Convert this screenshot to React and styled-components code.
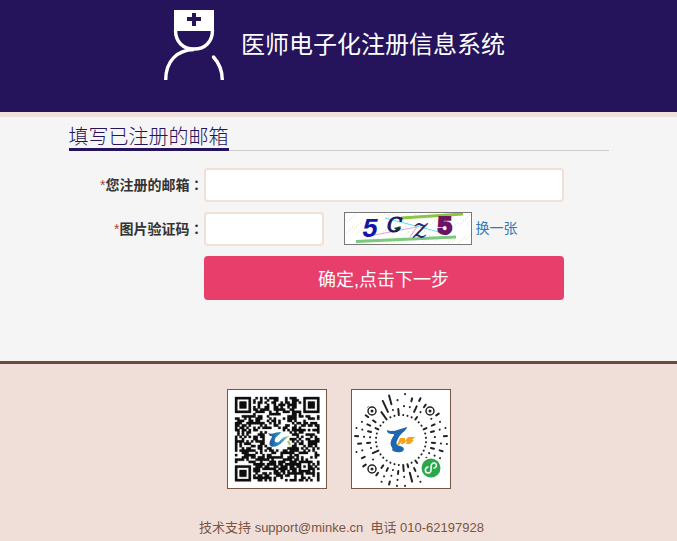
import React from "react";
import styled, { createGlobalStyle } from "styled-components";

const GlobalStyle = createGlobalStyle`
  * {
    box-sizing: border-box;
  }

  body {
    margin: 0;
    background-color: #efdfd8;
    color: #333;
    font-family: "Liberation Sans", "Noto Sans CJK SC", sans-serif;
    font-size: 14px;
    line-height: 20px;
  }
`;

const Header = styled.header`
  display: flex;
  justify-content: center;
  align-items: center;
  gap: 17px;
  height: 117px;
  padding: 0 8px 22px 0;
  background-color: #25135c;
  border-bottom: 5px solid #efe0d9;
`;

const SystemName = styled.h1`
  margin: 0;
  color: #fff;
  font-size: 24px;
  font-weight: 400;
  line-height: 30px;
`;

const Main = styled.main`
  padding: 10px 20px 61px;
  background-color: #f5f5f5;
  border-bottom: 3px solid #6b4a3a;
`;

const Content = styled.div`
  max-width: 540px;
  margin: 0 auto;
`;

const TitleBar = styled.div`
  display: flex;
  margin-bottom: 17px;
  border-bottom: 1px solid #ccc;
`;

const Title = styled.h2`
  margin: 0 0 -1px;
  color: #25135c;
  border-bottom: 3px solid #25135c;
  font-size: 20px;
  font-weight: 300;
  line-height: 21px;
`;

const Form = styled.form`
  display: flex;
  flex-direction: column;
  gap: 10px;
`;

const Row = styled.div`
  display: grid;
  grid-template-columns: 3fr 8fr 1fr;
  align-items: start;
`;

const Label = styled.label`
  font-weight: bold;
  line-height: 32px;
  text-align: right;
  white-space: nowrap;
`;

const Required = styled.span`
  color: #a94442;
  font-weight: normal;
`;

const Colon = styled.span`
  font-family: "Noto Sans CJK TC", sans-serif;
`;

const Field = styled.div`
  display: flex;
  align-items: flex-start;
  grid-column: 2;
`;

const Input = styled.input`
  width: ${({ $short }) => ($short ? "120px" : "100%")};
  height: 34px;
  padding: 6px 10px;
  background-color: #fff;
  border: 2px solid #f0e0d6;
  border-radius: 4px;
  font: inherit;
`;

const CaptchaImage = styled.svg`
  flex: none;
  margin: 0 4px 0 20px;
  background-color: #fff;
  border: 1px solid #777;
`;

const RefreshLink = styled.a`
  color: #337ab7;
  line-height: 32px;
  text-decoration: none;
  white-space: nowrap;
`;

const SubmitButton = styled.button`
  width: 100%;
  height: 44px;
  color: #fff;
  background-color: #e83e6c;
  border: none;
  border-radius: 4px;
  font-family: inherit;
  font-size: 18px;
  cursor: pointer;
`;

const Footer = styled.footer`
  padding: 25px 20px 3px;
  color: #7a5544;
  font-size: 13px;
  text-align: center;
`;

const Codes = styled.div`
  display: flex;
  justify-content: center;
  gap: 24px;
  margin-bottom: 29px;
`;

const CodeImage = styled.svg`
  width: 100px;
  height: 100px;
  background-color: #fff;
  border: 1px solid #7a5544;
`;

const Support = styled.p`
  margin: 0 0 0 6px;
  white-space: pre-wrap;
`;

function DoctorIcon() {
  return (
    <svg width="60" height="70" viewBox="0 0 60 70" fill="none" aria-hidden="true">
      <path d="M10 0H50V21H10Z" fill="#fff" />
      <path d="M28 3h4v4h5v4h-5v5h-4v-5h-5V7h5Z" fill="#25135c" />
      <path d="M11.500 20C11.500 32 19 39 30 39S48.500 32 48.500 20" stroke="#fff" strokeWidth="3.400" />
      <path d="M30 39.500C13 40 1.700 51 1.700 70" stroke="#fff" strokeWidth="3.400" />
      <path d="M49.500 47C55 53 58.300 60 58.300 70" stroke="#fff" strokeWidth="3.400" />
      <circle cx="49.500" cy="47" r="1.700" fill="#fff" />
    </svg>
  );
}

function Captcha() {
  const dots = [];
  for (let i = 0; i < 150; i++) {
    dots.push(`M${(i * 47) % 126} ${(i * 19 + (i % 7) * 5) % 31}h1`);
  }
  return (
    <CaptchaImage width="128" height="33" viewBox="0 0 126 31" role="img" aria-label="图片验证码">
      <path d={dots.join("")} stroke="#dce0c0" />
      <path d="M56 5L118 1" stroke="#8cc63f" strokeWidth="3" />
      <path d="M11 28.500L111 24" stroke="#7cc87c" strokeWidth="3" />
      <path d="M40 5L98 20" stroke="#5fdcf0" />
      <path d="M29 22L72 14L65 24" stroke="#d8a8d8" fill="none" />
      <text x="17" y="24" fontSize="27" fontFamily="Liberation Mono" fontStyle="italic" fontWeight="bold" fill="#1414a8">5</text>
      <text x="42" y="19" fontSize="20" fontFamily="DejaVu Serif" fontStyle="italic" fill="#1c1464" stroke="#1c1464">C</text>
      <text x="68" y="25" fontSize="28" fontFamily="DejaVu Serif" fontStyle="italic" fill="#28286e">z</text>
      <text x="92" y="21" fontSize="26" fontFamily="Liberation Mono" fontWeight="bold" fill="#6c1464" stroke="#6c1464" strokeWidth="2">5</text>
      <path d="M49 15L56 13L52 18Z" fill="#184018" />
    </CaptchaImage>
  );
}

const QR_SIZE = 37;

function ring(x, y, cx, cy, max) {
  const d = Math.max(Math.abs(x - cx), Math.abs(y - cy));
  return d <= max ? d : -1;
}

function qrPath() {
  let seed = 77;
  let d = "";
  for (let y = 0; y < QR_SIZE; y++) {
    for (let x = 0; x < QR_SIZE; x++) {
      seed = (seed * 1664525 + 1013904223) % 4294967296;
      let on = seed / 4294967296 < 0.54;
      [[3, 3], [33, 3], [3, 33]].forEach(([cx, cy]) => {
        const r = ring(x, y, cx, cy, 4);
        if (r >= 0) on = r !== 2 && r !== 4;
      });
      const align = ring(x, y, 30, 30, 2);
      if (align >= 0) on = align !== 1;
      if (((x - 18) / 6) ** 2 + ((y - 18) / 4.5) ** 2 < 1) on = false;
      if (on) d += `M${x} ${y}h1v1h-1Z`;
    }
  }
  return d;
}

function QrCode() {
  return (
    <CodeImage viewBox="0 0 98 98" role="img" aria-label="二维码">
      <defs>
        <linearGradient id="bird" x1="0" x2="1">
          <stop offset="0" stopColor="#1c4f9c" />
          <stop offset="0.6" stopColor="#2c9cc4" />
          <stop offset="1" stopColor="#d8d878" />
        </linearGradient>
      </defs>
      <path
        d={qrPath()}
        fill="#111"
        stroke="#111"
        strokeWidth="0.150"
        transform="translate(7 7) scale(2.280)"
      />
      <path
        d="M40 43C44 45 47 42 53 42C52 45 48 46 47 49C46 52 48 53 51 52C54 48 57 46 62 46C56 49 54 54 49 56C44 58 40 56 42 51C43 48 46 46 42 46Z"
        fill="url(#bird)"
      />
      <path d="M60 51L62 55" stroke="#a8c850" strokeWidth="2" />
    </CodeImage>
  );
}

// one string per spoke, clockwise from the top, inner ring first
const SPOKES = [
  "10010001", "10010110", "10111011", "11010110", "10000000", "10001011",
  "11011010", "10110101", "10010011", "10110101", "10110110", "10101010",
  "10100000", "10000000", "11000000", "10110101", "11011110", "11101001",
  "10110101", "10101011", "10110101", "10110110", "10000000", "10010011",
  "11100110", "10100101", "10110110", "10101011", "10110101", "11011010",
  "10110110", "10000111", "11110000", "10111110", "10101111", "11100100",
];

function spokePath(spoke, index) {
  const angle = ((index * 10 + 5) * Math.PI) / 180;
  const point = (r) =>
    `${(49 + r * Math.sin(angle)).toFixed(2)} ${(50 - r * Math.cos(angle)).toFixed(2)}`;
  return [...spoke.matchAll(/1+/g)]
    .map((run) => {
      const from = 25 + run.index * 3;
      const to = from + (run[0].length - 1) * 3 + 0.1;
      return `M${point(from)}L${point(to)}`;
    })
    .join("");
}

function MiniProgramCode() {
  return (
    <CodeImage viewBox="0 0 98 98" role="img" aria-label="小程序码">
      <path d={SPOKES.map(spokePath).join("")} stroke="#222" strokeWidth="2" strokeLinecap="round" />
      {[[20, 21], [78, 21], [20, 79]].map(([x, y]) => (
        <g key={`${x}-${y}`}>
          <circle cx={x} cy={y} r="5.500" fill="#fff" />
          <circle cx={x} cy={y} r="4" fill="#fff" stroke="#222" strokeWidth="1.500" />
          <circle cx={x} cy={y} r="1.500" fill="#222" />
        </g>
      ))}
      <path
        d="M35 40C40 43 48 39 55 37C55 40 49 43 47 47C44 52 43 55 48 56C53 57 53 61 49 62C44 63 41 61 40 60C42 58 37 56 39 51C40 47 44 44 41 44C37 44 35 43 35 40Z"
        fill="#1f66b0"
      />
      <path
        d="M45 55L48 48H53L53 51L56 47H63L60 50H62L58 54H54L55 51L51 54H49L50 51L47 55Z"
        fill="#f5a21c"
      />
      <circle cx="79" cy="78" r="11" fill="#fff" />
      <circle cx="79" cy="78" r="9.500" fill="#2ca84c" />
      <path
        d="M76 77C72 78 73 83 76 83C80 83 79 79 79 77C79 73 82 72 84 74C85 76 84 78 82 78"
        fill="none"
        stroke="#fff"
        strokeWidth="1.500"
        strokeLinecap="round"
      />
    </CodeImage>
  );
}

function App() {
  return (
    <>
      <GlobalStyle />
      <Header>
        <DoctorIcon />
        <SystemName>医师电子化注册信息系统</SystemName>
      </Header>
      <Main>
        <Content>
          <TitleBar>
            <Title>填写已注册的邮箱</Title>
          </TitleBar>
          <Form>
            <Row>
              <Label htmlFor="email">
                <Required>*</Required>您注册的邮箱<Colon>：</Colon>
              </Label>
              <Field>
                <Input id="email" type="email" />
              </Field>
            </Row>
            <Row>
              <Label htmlFor="captcha">
                <Required>*</Required>图片验证码<Colon>：</Colon>
              </Label>
              <Field>
                <Input id="captcha" type="text" $short />
                <Captcha />
                <RefreshLink href="#">换一张</RefreshLink>
              </Field>
            </Row>
            <Row>
              <Field>
                <SubmitButton type="button">确定,点击下一步</SubmitButton>
              </Field>
            </Row>
          </Form>
        </Content>
      </Main>
      <Footer>
        <Codes>
          <QrCode />
          <MiniProgramCode />
        </Codes>
        <Support>技术支持 support@minke.cn{"  "}电话 010-62197928</Support>
      </Footer>
    </>
  );
}

export default App;
